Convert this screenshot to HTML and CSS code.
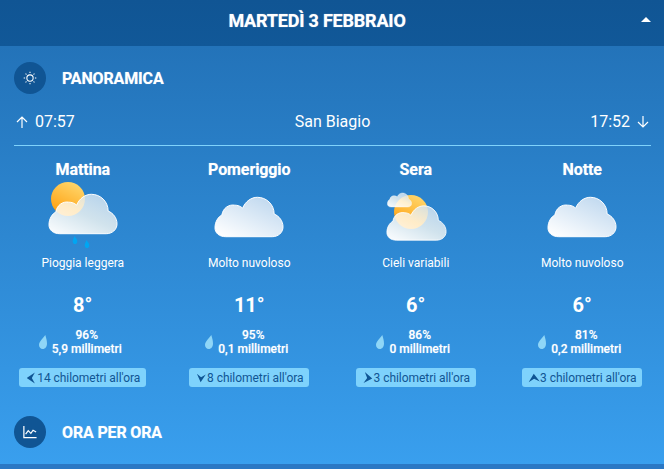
FILE: index.html
```html
<!DOCTYPE html>
<html lang="it">
<head>
<meta charset="utf-8">
<title>Meteo</title>
<link rel="stylesheet" href="styles.css">
</head>
<body>
<svg class="defs" width="0" height="0" aria-hidden="true">
  <defs>
    <linearGradient id="cloudFill" x1="0.1" y1="1" x2="0.9" y2="0">
      <stop offset="0" stop-color="#ffffff"/>
      <stop offset="1" stop-color="#bcd6ee"/>
    </linearGradient>
    <linearGradient id="cloudFillSoft" x1="0.1" y1="1" x2="0.9" y2="0">
      <stop offset="0" stop-color="#ffffff" stop-opacity="0.97"/>
      <stop offset="0.5" stop-color="#fffdf5" stop-opacity="0.78"/>
      <stop offset="1" stop-color="#c4dbf0" stop-opacity="0.88"/>
    </linearGradient>
    <linearGradient id="sunFill" x1="0.7" y1="0" x2="0.2" y2="1">
      <stop offset="0" stop-color="#ffd66b"/>
      <stop offset="1" stop-color="#ff9d0a"/>
    </linearGradient>
    <symbol id="cloud" viewBox="-1 -1 71 42">
      <path fill="url(#cloudFill)" stroke="#fff" stroke-width="1" d="M11 40C4 40 0 36 0 31C0 25 3 20 7 18C8 11 14 7 20 8C23 8 26 9 28 11C31 4 37 0 43 0C52 0 60 7 60 17C65 19 69 24 69 30C69 36 64 40 58 40Z"/>
    </symbol>
    <symbol id="cloudSoft" viewBox="-1 -1 71 42">
      <path fill="url(#cloudFillSoft)" stroke="#fff" stroke-width="1" d="M11 40C4 40 0 36 0 31C0 25 3 20 7 18C8 11 14 7 20 8C23 8 26 9 28 11C31 4 37 0 43 0C52 0 60 7 60 17C65 19 69 24 69 30C69 36 64 40 58 40Z"/>
    </symbol>
    <symbol id="drop" viewBox="0 0 8 14">
      <path fill="#8fd6f7" d="M6.3 0C7.2 3 8 5.600 8 8.500C8 11.800 6.200 14 3.800 14C1.500 14 0 12.300 0 10C0 6.500 4 3.500 6.300 0Z"/>
    </symbol>
    <symbol id="rainDrop" viewBox="0 0 8 14">
      <path fill="#00a6f2" d="M3 0C3.800 2 8 5 8 9C8 12 6.200 14 4 14C1.800 14 0 12 0 9C0 6 2.500 3 3 0Z"/>
    </symbol>
    <symbol id="arrow" viewBox="0 0 14 14">
      <path fill="#0f5594" d="M7 2L13.500 11.500L7 8L.5 11.500Z"/>
    </symbol>
  </defs>
</svg>

<header class="day-bar">
  <h1 class="day-title">MARTEDÌ 3 FEBBRAIO</h1>
  <span class="caret"></span>
</header>

<main class="panel">
  <section class="section-head">
    <span class="badge">
      <svg class="badge-icon" viewBox="0 0 16 16" fill="none" stroke="#fff">
        <circle cx="8" cy="8" r="3.600" stroke-width="1.200"/>
        <path stroke-width="1.200" d="M8 .8v1.600M8 13.600v1.600M.8 8h1.600M13.600 8h1.600M2.900 2.900l1.100 1.100M12 12l1.100 1.100M2.900 13.100L4 12M12 4l1.100-1.100"/>
      </svg>
    </span>
    <h2 class="section-title">PANORAMICA</h2>
  </section>

  <div class="sun-row">
    <span class="sun-time">
      <svg class="sun-arrow" viewBox="0 0 12 12" fill="none" stroke="#fff" stroke-width="1.200"><path d="M6 12V1M1 6l5-5 5 5"/></svg>
      07:57
    </span>
    <span class="saint">San Biagio</span>
    <span class="sun-time">
      17:52
      <svg class="sun-arrow" viewBox="0 0 12 12" fill="none" stroke="#fff" stroke-width="1.200"><path d="M6 0v11M1 6l5 5 5-5"/></svg>
    </span>
  </div>

  <div class="forecast">
    <article class="period">
      <h3 class="period-name">Mattina</h3>
      <div class="sky">
        <svg class="sky-art" viewBox="0 0 140 80">
          <circle cx="55" cy="20" r="17" fill="url(#sunFill)"/>
          <use href="#cloudSoft" x="35" y="14" width="70" height="42"/>
          <use href="#rainDrop" x="59" y="57" width="6" height="8"/>
          <use href="#rainDrop" x="71" y="61" width="6" height="8"/>
        </svg>
      </div>
      <p class="sky-text">Pioggia leggera</p>
      <p class="temp">8°</p>
      <div class="precip">
        <svg class="drop"><use href="#drop"/></svg>
        <p class="precip-text">96%<br>5,9 millimetri</p>
      </div>
      <span class="wind"><svg class="wind-arrow to-w"><use href="#arrow"/></svg>14 chilometri all'ora</span>
    </article>

    <article class="period">
      <h3 class="period-name">Pomeriggio</h3>
      <div class="sky">
        <svg class="sky-art" viewBox="0 0 140 80">
          <use href="#cloud" x="35" y="17" width="70" height="42"/>
        </svg>
      </div>
      <p class="sky-text">Molto nuvoloso</p>
      <p class="temp">11°</p>
      <div class="precip">
        <svg class="drop"><use href="#drop"/></svg>
        <p class="precip-text">95%<br>0,1 millimetri</p>
      </div>
      <span class="wind"><svg class="wind-arrow to-s"><use href="#arrow"/></svg>8 chilometri all'ora</span>
    </article>

    <article class="period">
      <h3 class="period-name">Sera</h3>
      <div class="sky">
        <svg class="sky-art" viewBox="0 0 140 80">
          <circle cx="65" cy="33" r="17" fill="url(#sunFill)"/>
          <use href="#cloudSoft" x="40" y="26" width="61" height="36"/>
          <use href="#cloudSoft" x="41" y="13" width="25" height="16"/>
        </svg>
      </div>
      <p class="sky-text">Cieli variabili</p>
      <p class="temp">6°</p>
      <div class="precip">
        <svg class="drop"><use href="#drop"/></svg>
        <p class="precip-text">86%<br>0 millimetri</p>
      </div>
      <span class="wind"><svg class="wind-arrow to-e"><use href="#arrow"/></svg>3 chilometri all'ora</span>
    </article>

    <article class="period">
      <h3 class="period-name">Notte</h3>
      <div class="sky">
        <svg class="sky-art" viewBox="0 0 140 80">
          <use href="#cloud" x="35" y="17" width="70" height="42"/>
        </svg>
      </div>
      <p class="sky-text">Molto nuvoloso</p>
      <p class="temp">6°</p>
      <div class="precip">
        <svg class="drop"><use href="#drop"/></svg>
        <p class="precip-text">81%<br>0,2 millimetri</p>
      </div>
      <span class="wind"><svg class="wind-arrow to-n"><use href="#arrow"/></svg>3 chilometri all'ora</span>
    </article>
  </div>

  <section class="section-head hourly">
    <span class="badge">
      <svg class="badge-icon" viewBox="0 0 16 16" fill="none" stroke="#fff" stroke-width="1.400">
        <path d="M1 1v13.500h14.500"/>
        <path d="M3 10.500l3-4 3 3 2.500-3.500 3.500 2"/>
      </svg>
    </span>
    <h2 class="section-title">ORA PER ORA</h2>
  </section>
</main>
<div class="next-bar"></div>
</body>
</html>
```
FILE: styles.css
```css
* { box-sizing: border-box; }

html, body {
  margin: 0;
  height: 469px;
  overflow: hidden;
}

body {
  display: flex;
  flex-direction: column;
  font-family: Roboto, "Liberation Sans", sans-serif;
  color: #fff;
  background: #2b78c4;
}

h1, h2, h3, p { margin: 0; }

.defs { position: absolute; }

.day-bar {
  flex: 0 0 46px;
  display: flex;
  align-items: center;
  justify-content: center;
  padding: 0 30px 5px 0;
  position: relative;
  background: linear-gradient(#105594, #115898);
}

.day-title {
  font-size: 18px;
  font-weight: 700;
  letter-spacing: -0.2px;
  text-shadow: 0 0 1px rgba(255, 255, 255, 0.6);
}

.caret {
  position: absolute;
  right: 13px;
  top: 17px;
  width: 0;
  height: 0;
  border-left: 5px solid transparent;
  border-right: 5px solid transparent;
  border-bottom: 5px solid #fff;
}

.panel {
  flex: 0 0 418px;
  padding: 16px 13px 0 14px;
  background: linear-gradient(#2373b9, #399fee);
}

.section-head {
  display: flex;
  align-items: center;
  gap: 16px;
}

.badge {
  width: 32px;
  height: 32px;
  border-radius: 50%;
  background: #105594;
  display: flex;
  align-items: center;
  justify-content: center;
}

.badge-icon { width: 14px; height: 14px; }

.section-title {
  font-size: 16px;
  font-weight: 700;
  letter-spacing: -0.15px;
  text-shadow: 0 0 1px rgba(255, 255, 255, 0.5);
}

.sun-row {
  display: flex;
  justify-content: space-between;
  align-items: center;
  margin-top: 16px;
  height: 22px;
  padding: 0 2px;
  font-size: 16px;
}

.sun-time {
  display: flex;
  align-items: center;
  gap: 7px;
}

.sun-arrow { width: 12px; height: 12px; margin-top: 2px; }

.forecast {
  display: grid;
  grid-template-columns: repeat(4, 166.5px);
  margin: 13px -13px 0 -14.5px;
  padding-top: 15px;
  position: relative;
}

.forecast::before {
  content: "";
  position: absolute;
  top: 0;
  left: 14.5px;
  right: 13px;
  height: 1px;
  background: #7fd2fb;
}

.period {
  display: flex;
  flex-direction: column;
  align-items: center;
}

.period-name {
  font-size: 16px;
  font-weight: 700;
  line-height: 19px;
  letter-spacing: -0.1px;
  text-shadow: 0 0 1px rgba(255, 255, 255, 0.5);
}

.sky {
  height: 74px;
}

.sky-art {
  display: block;
  width: 140px;
  height: 80px;
}

.sky-text {
  font-size: 12px;
  line-height: 14px;
  margin-top: 3px;
}

.temp {
  font-size: 20px;
  font-weight: 700;
  line-height: 24px;
  margin-top: 23px;
}

.precip {
  display: flex;
  align-items: center;
  gap: 5px;
  margin: 11px 5px 0 0;
}

.drop { width: 8px; height: 14px; }

.precip-text {
  font-size: 12px;
  font-weight: 500;
  line-height: 14px;
  text-align: center;
  text-shadow: 0 0 1px rgba(255, 255, 255, 0.5);
}

.wind {
  display: flex;
  align-items: center;
  height: 19px;
  margin-top: 12px;
  padding: 0 6px;
  border-radius: 3px;
  background: #7ed2fc;
  color: #105594;
  font-size: 12px;
  letter-spacing: -0.05px;
  white-space: nowrap;
}

.wind-arrow { width: 12px; height: 12px; flex: none; }
.to-w { transform: rotate(-90deg); }
.to-s { transform: rotate(185deg) scaleX(0.8); }
.to-e { transform: rotate(97deg); }
.to-n { transform: rotate(-3deg); }

.hourly { margin-top: 29px; }

.next-bar { flex: 1; }
```
